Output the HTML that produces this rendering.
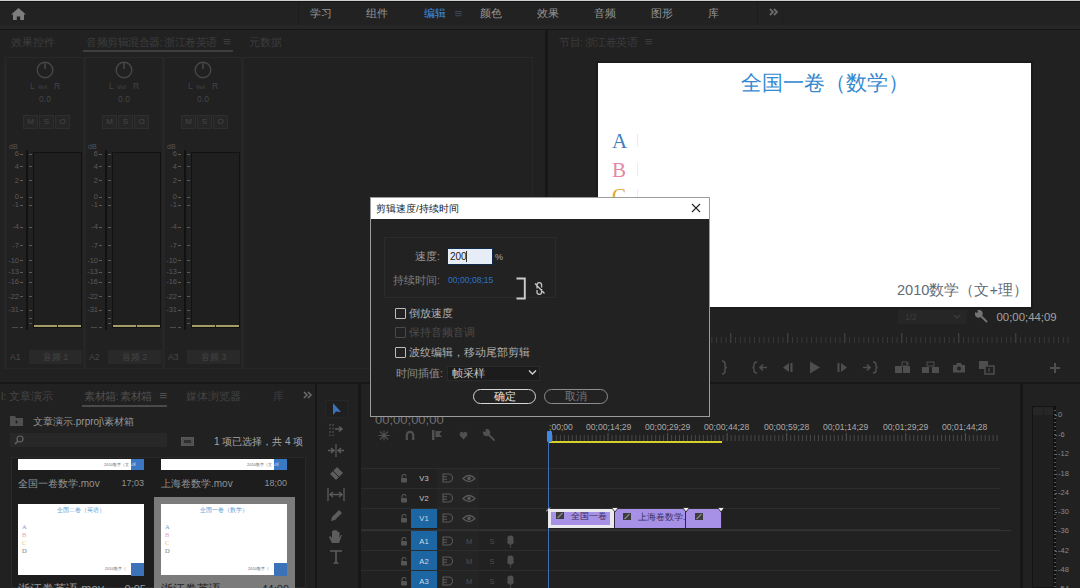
<!DOCTYPE html>
<html><head><meta charset="utf-8">
<style>
*{margin:0;padding:0;box-sizing:border-box}
html,body{width:1080px;height:588px;overflow:hidden;background:#171717;font-family:"Liberation Sans",sans-serif;position:relative}
.a{position:absolute}
.t{position:absolute;white-space:nowrap;line-height:1}
.p{position:absolute;background:#212121}
</style></head>
<body>
<div class="a" style="left:0px;top:0px;width:1080px;height:1px;background:#cfcfcf;"></div><div class="a" style="left:0px;top:1px;width:1080px;height:1px;background:#141414;"></div><div class="a" style="left:0px;top:2px;width:1080px;height:23px;background:#222222;"></div><div class="a" style="left:0px;top:25px;width:1080px;height:4px;background:#262626;"></div><div class="a" style="left:0px;top:29px;width:1080px;height:1px;background:#161616;"></div><div class="a" style="left:298px;top:2px;width:1px;height:23px;background:#1c1c1c;"></div><div class="a" style="left:757px;top:2px;width:1px;height:23px;background:#1c1c1c;"></div><div class="a" style="left:783px;top:2px;width:1px;height:23px;background:#202020;"></div><svg class="a" style="left:11px;top:8px;" width="15" height="12" viewBox="0 0 15 12"><path d="M7.5 0 L0 6.5 H2 V12 H5.8 V8.5 H9.2 V12 H13 V6.5 H15 Z" fill="#7d7d7d"/></svg><div class="t" style="left:310px;top:8.25px;font-size:10.5px;height:10.5px;color:#959595;">学习</div><div class="t" style="left:366px;top:8.25px;font-size:10.5px;height:10.5px;color:#959595;">组件</div><div class="t" style="left:424px;top:8.25px;font-size:10.5px;height:10.5px;color:#3d8fe3;">编辑</div><div class="t" style="left:480px;top:8.25px;font-size:10.5px;height:10.5px;color:#959595;">颜色</div><div class="t" style="left:537px;top:8.25px;font-size:10.5px;height:10.5px;color:#959595;">效果</div><div class="t" style="left:594px;top:8.25px;font-size:10.5px;height:10.5px;color:#959595;">音频</div><div class="t" style="left:651px;top:8.25px;font-size:10.5px;height:10.5px;color:#959595;">图形</div><div class="t" style="left:708px;top:8.25px;font-size:10.5px;height:10.5px;color:#959595;">库</div><div class="t" style="left:454.5px;top:6.75px;font-size:13.5px;height:13.5px;color:#3c4856;">≡</div><svg class="a" style="left:769px;top:8px;" width="10" height="8" viewBox="0 0 10 8"><path d="M1 1 L4 4 L1 7 M5 1 L8 4 L5 7" stroke="#6a6a6a" stroke-width="1.8" fill="none"/></svg><div class="p" style="left:0;top:30px;width:545px;height:352px"></div><div class="t" style="left:11px;top:36.75px;font-size:10.5px;height:10.5px;color:#3d3d3d;">效果控件</div><div class="t" style="left:86px;top:36.75px;font-size:10.5px;height:10.5px;color:#3d3d3d;letter-spacing:-0.5px">音频剪辑混合器: 浙江卷英语</div><div class="t" style="left:223px;top:35.25px;font-size:13.5px;height:13.5px;color:#3d3d3d;">≡</div><div class="a" style="left:83px;top:50px;width:150px;height:2px;background:#3e3e3e;"></div><div class="t" style="left:248.5px;top:36.75px;font-size:10.5px;height:10.5px;color:#3d3d3d;">元数据</div><div class="a" style="left:4px;top:57px;width:529px;height:1px;background:#292929;"></div><div class="a" style="left:532px;top:57px;width:1px;height:312px;background:#272727;"></div><div class="a" style="left:4px;top:368px;width:529px;height:1px;background:#272727;"></div><div class="a" style="left:4px;top:57px;width:3px;height:312px;background:#262626;"></div><div class="a" style="left:241px;top:57px;width:3px;height:312px;background:#262626;"></div><svg class="a" style="left:35px;top:60px;" width="20" height="20" viewBox="0 0 20 20"><circle cx="10" cy="10" r="7.8" fill="none" stroke="#474747" stroke-width="1.4"/><path d="M10 2.5 V9" stroke="#474747" stroke-width="1.5"/></svg><div class="t" style="left:30px;top:81.75px;font-size:8.5px;height:8.5px;color:#444;">L</div><div class="t" style="left:38px;top:83.50px;font-size:6px;height:6px;color:#3c3c3c;font-weight:bold">Vol</div><div class="t" style="left:54px;top:81.75px;font-size:8.5px;height:8.5px;color:#444;">R</div><div class="t" style="left:-155px;width:400px;text-align:center;top:94.75px;font-size:8.5px;height:8.5px;color:#464646;">0.0</div><div class="a" style="left:23px;top:115px;width:15px;height:14px;background:#262626;border:1px solid #2e2e2e"></div><div class="t" style="left:-169.5px;width:400px;text-align:center;top:118.00px;font-size:8px;height:8px;color:#474747;">M</div><div class="a" style="left:39px;top:115px;width:15px;height:14px;background:#262626;border:1px solid #2e2e2e"></div><div class="t" style="left:-153.5px;width:400px;text-align:center;top:118.00px;font-size:8px;height:8px;color:#474747;">S</div><div class="a" style="left:55px;top:115px;width:15px;height:14px;background:#262626;border:1px solid #2e2e2e"></div><div class="t" style="left:-137.5px;width:400px;text-align:center;top:118.00px;font-size:8px;height:8px;color:#474747;">O</div><div class="t" style="left:9px;top:142.50px;font-size:7px;height:7px;color:#555;">dB</div><div class="a" style="left:26px;top:150px;width:2px;height:180px;background:#121212;"></div><div class="t" style="right:1061px;top:150.25px;font-size:7.5px;height:7.5px;color:#5a5a5a;">6</div><div class="a" style="left:20px;top:154px;width:3px;height:1px;background:#5a5a5a;"></div><div class="a" style="left:29px;top:154px;width:3px;height:1px;background:#5a5a5a;"></div><div class="t" style="right:1061px;top:162.75px;font-size:7.5px;height:7.5px;color:#5a5a5a;">4</div><div class="a" style="left:20px;top:166px;width:3px;height:1px;background:#5a5a5a;"></div><div class="a" style="left:29px;top:166px;width:3px;height:1px;background:#5a5a5a;"></div><div class="t" style="right:1061px;top:176.75px;font-size:7.5px;height:7.5px;color:#5a5a5a;">2</div><div class="a" style="left:20px;top:180px;width:3px;height:1px;background:#5a5a5a;"></div><div class="a" style="left:29px;top:180px;width:3px;height:1px;background:#5a5a5a;"></div><div class="t" style="right:1061px;top:193.25px;font-size:7.5px;height:7.5px;color:#5a5a5a;">0</div><div class="a" style="left:20px;top:197px;width:3px;height:1px;background:#5a5a5a;"></div><div class="a" style="left:29px;top:197px;width:3px;height:1px;background:#5a5a5a;"></div><div class="t" style="right:1061px;top:201.25px;font-size:7.5px;height:7.5px;color:#5a5a5a;">-1</div><div class="a" style="left:20px;top:205px;width:3px;height:1px;background:#5a5a5a;"></div><div class="a" style="left:29px;top:205px;width:3px;height:1px;background:#5a5a5a;"></div><div class="t" style="right:1061px;top:223.25px;font-size:7.5px;height:7.5px;color:#5a5a5a;">-4</div><div class="a" style="left:20px;top:227px;width:3px;height:1px;background:#5a5a5a;"></div><div class="a" style="left:29px;top:227px;width:3px;height:1px;background:#5a5a5a;"></div><div class="t" style="right:1061px;top:241.75px;font-size:7.5px;height:7.5px;color:#5a5a5a;">-7</div><div class="a" style="left:20px;top:245px;width:3px;height:1px;background:#5a5a5a;"></div><div class="a" style="left:29px;top:245px;width:3px;height:1px;background:#5a5a5a;"></div><div class="t" style="right:1061px;top:256.75px;font-size:7.5px;height:7.5px;color:#5a5a5a;">-10</div><div class="a" style="left:20px;top:260px;width:3px;height:1px;background:#5a5a5a;"></div><div class="a" style="left:29px;top:260px;width:3px;height:1px;background:#5a5a5a;"></div><div class="t" style="right:1061px;top:268.25px;font-size:7.5px;height:7.5px;color:#5a5a5a;">-13</div><div class="a" style="left:20px;top:272px;width:3px;height:1px;background:#5a5a5a;"></div><div class="a" style="left:29px;top:272px;width:3px;height:1px;background:#5a5a5a;"></div><div class="t" style="right:1061px;top:278.25px;font-size:7.5px;height:7.5px;color:#5a5a5a;">-16</div><div class="a" style="left:20px;top:282px;width:3px;height:1px;background:#5a5a5a;"></div><div class="a" style="left:29px;top:282px;width:3px;height:1px;background:#5a5a5a;"></div><div class="t" style="right:1061px;top:292.75px;font-size:7.5px;height:7.5px;color:#5a5a5a;">-22</div><div class="a" style="left:20px;top:296px;width:3px;height:1px;background:#5a5a5a;"></div><div class="a" style="left:29px;top:296px;width:3px;height:1px;background:#5a5a5a;"></div><div class="t" style="right:1061px;top:306.25px;font-size:7.5px;height:7.5px;color:#5a5a5a;">-31</div><div class="a" style="left:20px;top:310px;width:3px;height:1px;background:#5a5a5a;"></div><div class="a" style="left:29px;top:310px;width:3px;height:1px;background:#5a5a5a;"></div><div class="a" style="left:29px;top:318px;width:3px;height:1px;background:#555;"></div><div class="a" style="left:29px;top:323px;width:3px;height:1px;background:#555;"></div><div class="a" style="left:12px;top:327px;width:6px;height:1px;background:#4a4a4a;"></div><div class="a" style="left:20px;top:327px;width:3px;height:1px;background:#555;"></div><div class="a" style="left:33px;top:152px;width:49px;height:176px;background:#1f1f1f;border:1px solid #121212"></div><div class="a" style="left:34px;top:325px;width:23px;height:2px;background:#a29d62;"></div><div class="a" style="left:58px;top:325px;width:23px;height:2px;background:#a29d62;"></div><div class="t" style="left:10px;top:352.75px;font-size:8.5px;height:8.5px;color:#484848;">A1</div><div class="a" style="left:29px;top:350px;width:53px;height:14px;background:#292929;"></div><div class="t" style="left:-144.5px;width:400px;text-align:center;top:352.50px;font-size:9px;height:9px;color:#444444;">音频 1</div><div class="a" style="left:83px;top:57px;width:3px;height:312px;background:#262626;"></div><svg class="a" style="left:114px;top:60px;" width="20" height="20" viewBox="0 0 20 20"><circle cx="10" cy="10" r="7.8" fill="none" stroke="#474747" stroke-width="1.4"/><path d="M10 2.5 V9" stroke="#474747" stroke-width="1.5"/></svg><div class="t" style="left:109px;top:81.75px;font-size:8.5px;height:8.5px;color:#444;">L</div><div class="t" style="left:117px;top:83.50px;font-size:6px;height:6px;color:#3c3c3c;font-weight:bold">Vol</div><div class="t" style="left:133px;top:81.75px;font-size:8.5px;height:8.5px;color:#444;">R</div><div class="t" style="left:-76px;width:400px;text-align:center;top:94.75px;font-size:8.5px;height:8.5px;color:#464646;">0.0</div><div class="a" style="left:102px;top:115px;width:15px;height:14px;background:#262626;border:1px solid #2e2e2e"></div><div class="t" style="left:-90.5px;width:400px;text-align:center;top:118.00px;font-size:8px;height:8px;color:#474747;">M</div><div class="a" style="left:118px;top:115px;width:15px;height:14px;background:#262626;border:1px solid #2e2e2e"></div><div class="t" style="left:-74.5px;width:400px;text-align:center;top:118.00px;font-size:8px;height:8px;color:#474747;">S</div><div class="a" style="left:134px;top:115px;width:15px;height:14px;background:#262626;border:1px solid #2e2e2e"></div><div class="t" style="left:-58.5px;width:400px;text-align:center;top:118.00px;font-size:8px;height:8px;color:#474747;">O</div><div class="t" style="left:88px;top:142.50px;font-size:7px;height:7px;color:#555;">dB</div><div class="a" style="left:105px;top:150px;width:2px;height:180px;background:#121212;"></div><div class="t" style="right:982px;top:150.25px;font-size:7.5px;height:7.5px;color:#5a5a5a;">6</div><div class="a" style="left:99px;top:154px;width:3px;height:1px;background:#5a5a5a;"></div><div class="a" style="left:108px;top:154px;width:3px;height:1px;background:#5a5a5a;"></div><div class="t" style="right:982px;top:162.75px;font-size:7.5px;height:7.5px;color:#5a5a5a;">4</div><div class="a" style="left:99px;top:166px;width:3px;height:1px;background:#5a5a5a;"></div><div class="a" style="left:108px;top:166px;width:3px;height:1px;background:#5a5a5a;"></div><div class="t" style="right:982px;top:176.75px;font-size:7.5px;height:7.5px;color:#5a5a5a;">2</div><div class="a" style="left:99px;top:180px;width:3px;height:1px;background:#5a5a5a;"></div><div class="a" style="left:108px;top:180px;width:3px;height:1px;background:#5a5a5a;"></div><div class="t" style="right:982px;top:193.25px;font-size:7.5px;height:7.5px;color:#5a5a5a;">0</div><div class="a" style="left:99px;top:197px;width:3px;height:1px;background:#5a5a5a;"></div><div class="a" style="left:108px;top:197px;width:3px;height:1px;background:#5a5a5a;"></div><div class="t" style="right:982px;top:201.25px;font-size:7.5px;height:7.5px;color:#5a5a5a;">-1</div><div class="a" style="left:99px;top:205px;width:3px;height:1px;background:#5a5a5a;"></div><div class="a" style="left:108px;top:205px;width:3px;height:1px;background:#5a5a5a;"></div><div class="t" style="right:982px;top:223.25px;font-size:7.5px;height:7.5px;color:#5a5a5a;">-4</div><div class="a" style="left:99px;top:227px;width:3px;height:1px;background:#5a5a5a;"></div><div class="a" style="left:108px;top:227px;width:3px;height:1px;background:#5a5a5a;"></div><div class="t" style="right:982px;top:241.75px;font-size:7.5px;height:7.5px;color:#5a5a5a;">-7</div><div class="a" style="left:99px;top:245px;width:3px;height:1px;background:#5a5a5a;"></div><div class="a" style="left:108px;top:245px;width:3px;height:1px;background:#5a5a5a;"></div><div class="t" style="right:982px;top:256.75px;font-size:7.5px;height:7.5px;color:#5a5a5a;">-10</div><div class="a" style="left:99px;top:260px;width:3px;height:1px;background:#5a5a5a;"></div><div class="a" style="left:108px;top:260px;width:3px;height:1px;background:#5a5a5a;"></div><div class="t" style="right:982px;top:268.25px;font-size:7.5px;height:7.5px;color:#5a5a5a;">-13</div><div class="a" style="left:99px;top:272px;width:3px;height:1px;background:#5a5a5a;"></div><div class="a" style="left:108px;top:272px;width:3px;height:1px;background:#5a5a5a;"></div><div class="t" style="right:982px;top:278.25px;font-size:7.5px;height:7.5px;color:#5a5a5a;">-16</div><div class="a" style="left:99px;top:282px;width:3px;height:1px;background:#5a5a5a;"></div><div class="a" style="left:108px;top:282px;width:3px;height:1px;background:#5a5a5a;"></div><div class="t" style="right:982px;top:292.75px;font-size:7.5px;height:7.5px;color:#5a5a5a;">-22</div><div class="a" style="left:99px;top:296px;width:3px;height:1px;background:#5a5a5a;"></div><div class="a" style="left:108px;top:296px;width:3px;height:1px;background:#5a5a5a;"></div><div class="t" style="right:982px;top:306.25px;font-size:7.5px;height:7.5px;color:#5a5a5a;">-31</div><div class="a" style="left:99px;top:310px;width:3px;height:1px;background:#5a5a5a;"></div><div class="a" style="left:108px;top:310px;width:3px;height:1px;background:#5a5a5a;"></div><div class="a" style="left:108px;top:318px;width:3px;height:1px;background:#555;"></div><div class="a" style="left:108px;top:323px;width:3px;height:1px;background:#555;"></div><div class="a" style="left:91px;top:327px;width:6px;height:1px;background:#4a4a4a;"></div><div class="a" style="left:99px;top:327px;width:3px;height:1px;background:#555;"></div><div class="a" style="left:112px;top:152px;width:49px;height:176px;background:#1f1f1f;border:1px solid #121212"></div><div class="a" style="left:113px;top:325px;width:23px;height:2px;background:#a29d62;"></div><div class="a" style="left:137px;top:325px;width:23px;height:2px;background:#a29d62;"></div><div class="t" style="left:89px;top:352.75px;font-size:8.5px;height:8.5px;color:#484848;">A2</div><div class="a" style="left:108px;top:350px;width:53px;height:14px;background:#292929;"></div><div class="t" style="left:-65.5px;width:400px;text-align:center;top:352.50px;font-size:9px;height:9px;color:#444444;">音频 2</div><div class="a" style="left:162px;top:57px;width:3px;height:312px;background:#262626;"></div><svg class="a" style="left:193px;top:60px;" width="20" height="20" viewBox="0 0 20 20"><circle cx="10" cy="10" r="7.8" fill="none" stroke="#474747" stroke-width="1.4"/><path d="M10 2.5 V9" stroke="#474747" stroke-width="1.5"/></svg><div class="t" style="left:188px;top:81.75px;font-size:8.5px;height:8.5px;color:#444;">L</div><div class="t" style="left:196px;top:83.50px;font-size:6px;height:6px;color:#3c3c3c;font-weight:bold">Vol</div><div class="t" style="left:212px;top:81.75px;font-size:8.5px;height:8.5px;color:#444;">R</div><div class="t" style="left:3px;width:400px;text-align:center;top:94.75px;font-size:8.5px;height:8.5px;color:#464646;">0.0</div><div class="a" style="left:181px;top:115px;width:15px;height:14px;background:#262626;border:1px solid #2e2e2e"></div><div class="t" style="left:-11.5px;width:400px;text-align:center;top:118.00px;font-size:8px;height:8px;color:#474747;">M</div><div class="a" style="left:197px;top:115px;width:15px;height:14px;background:#262626;border:1px solid #2e2e2e"></div><div class="t" style="left:4.5px;width:400px;text-align:center;top:118.00px;font-size:8px;height:8px;color:#474747;">S</div><div class="a" style="left:213px;top:115px;width:15px;height:14px;background:#262626;border:1px solid #2e2e2e"></div><div class="t" style="left:20.5px;width:400px;text-align:center;top:118.00px;font-size:8px;height:8px;color:#474747;">O</div><div class="t" style="left:167px;top:142.50px;font-size:7px;height:7px;color:#555;">dB</div><div class="a" style="left:184px;top:150px;width:2px;height:180px;background:#121212;"></div><div class="t" style="right:903px;top:150.25px;font-size:7.5px;height:7.5px;color:#5a5a5a;">6</div><div class="a" style="left:178px;top:154px;width:3px;height:1px;background:#5a5a5a;"></div><div class="a" style="left:187px;top:154px;width:3px;height:1px;background:#5a5a5a;"></div><div class="t" style="right:903px;top:162.75px;font-size:7.5px;height:7.5px;color:#5a5a5a;">4</div><div class="a" style="left:178px;top:166px;width:3px;height:1px;background:#5a5a5a;"></div><div class="a" style="left:187px;top:166px;width:3px;height:1px;background:#5a5a5a;"></div><div class="t" style="right:903px;top:176.75px;font-size:7.5px;height:7.5px;color:#5a5a5a;">2</div><div class="a" style="left:178px;top:180px;width:3px;height:1px;background:#5a5a5a;"></div><div class="a" style="left:187px;top:180px;width:3px;height:1px;background:#5a5a5a;"></div><div class="t" style="right:903px;top:193.25px;font-size:7.5px;height:7.5px;color:#5a5a5a;">0</div><div class="a" style="left:178px;top:197px;width:3px;height:1px;background:#5a5a5a;"></div><div class="a" style="left:187px;top:197px;width:3px;height:1px;background:#5a5a5a;"></div><div class="t" style="right:903px;top:201.25px;font-size:7.5px;height:7.5px;color:#5a5a5a;">-1</div><div class="a" style="left:178px;top:205px;width:3px;height:1px;background:#5a5a5a;"></div><div class="a" style="left:187px;top:205px;width:3px;height:1px;background:#5a5a5a;"></div><div class="t" style="right:903px;top:223.25px;font-size:7.5px;height:7.5px;color:#5a5a5a;">-4</div><div class="a" style="left:178px;top:227px;width:3px;height:1px;background:#5a5a5a;"></div><div class="a" style="left:187px;top:227px;width:3px;height:1px;background:#5a5a5a;"></div><div class="t" style="right:903px;top:241.75px;font-size:7.5px;height:7.5px;color:#5a5a5a;">-7</div><div class="a" style="left:178px;top:245px;width:3px;height:1px;background:#5a5a5a;"></div><div class="a" style="left:187px;top:245px;width:3px;height:1px;background:#5a5a5a;"></div><div class="t" style="right:903px;top:256.75px;font-size:7.5px;height:7.5px;color:#5a5a5a;">-10</div><div class="a" style="left:178px;top:260px;width:3px;height:1px;background:#5a5a5a;"></div><div class="a" style="left:187px;top:260px;width:3px;height:1px;background:#5a5a5a;"></div><div class="t" style="right:903px;top:268.25px;font-size:7.5px;height:7.5px;color:#5a5a5a;">-13</div><div class="a" style="left:178px;top:272px;width:3px;height:1px;background:#5a5a5a;"></div><div class="a" style="left:187px;top:272px;width:3px;height:1px;background:#5a5a5a;"></div><div class="t" style="right:903px;top:278.25px;font-size:7.5px;height:7.5px;color:#5a5a5a;">-16</div><div class="a" style="left:178px;top:282px;width:3px;height:1px;background:#5a5a5a;"></div><div class="a" style="left:187px;top:282px;width:3px;height:1px;background:#5a5a5a;"></div><div class="t" style="right:903px;top:292.75px;font-size:7.5px;height:7.5px;color:#5a5a5a;">-22</div><div class="a" style="left:178px;top:296px;width:3px;height:1px;background:#5a5a5a;"></div><div class="a" style="left:187px;top:296px;width:3px;height:1px;background:#5a5a5a;"></div><div class="t" style="right:903px;top:306.25px;font-size:7.5px;height:7.5px;color:#5a5a5a;">-31</div><div class="a" style="left:178px;top:310px;width:3px;height:1px;background:#5a5a5a;"></div><div class="a" style="left:187px;top:310px;width:3px;height:1px;background:#5a5a5a;"></div><div class="a" style="left:187px;top:318px;width:3px;height:1px;background:#555;"></div><div class="a" style="left:187px;top:323px;width:3px;height:1px;background:#555;"></div><div class="a" style="left:170px;top:327px;width:6px;height:1px;background:#4a4a4a;"></div><div class="a" style="left:178px;top:327px;width:3px;height:1px;background:#555;"></div><div class="a" style="left:191px;top:152px;width:49px;height:176px;background:#1f1f1f;border:1px solid #121212"></div><div class="a" style="left:192px;top:325px;width:23px;height:2px;background:#a29d62;"></div><div class="a" style="left:216px;top:325px;width:23px;height:2px;background:#a29d62;"></div><div class="t" style="left:168px;top:352.75px;font-size:8.5px;height:8.5px;color:#484848;">A3</div><div class="a" style="left:187px;top:350px;width:53px;height:14px;background:#292929;"></div><div class="t" style="left:13.5px;width:400px;text-align:center;top:352.50px;font-size:9px;height:9px;color:#444444;">音频 3</div><div class="p" style="left:548px;top:30px;width:532px;height:352px"></div><div class="t" style="left:559px;top:36.75px;font-size:10.5px;height:10.5px;color:#3b3b3b;letter-spacing:-0.5px">节目: 浙江卷英语</div><div class="t" style="left:645px;top:35.25px;font-size:13.5px;height:13.5px;color:#3b3b3b;">≡</div><div class="a" style="left:596px;top:61px;width:437px;height:248px;background:#1b1b1b;"></div><div class="a" style="left:598px;top:63px;width:433px;height:244px;background:#ffffff;"></div><div class="t" style="left:740.5px;top:72.20px;font-size:21.2px;height:21.2px;color:#3589d0;">全国一卷（数学）</div><div class="t" style="left:612px;top:130.50px;font-size:21px;height:21px;color:#3f7fc2;font-family:'Liberation Serif',serif">A</div><div class="a" style="left:637px;top:134px;width:1px;height:13px;background:#ececec;"></div><div class="t" style="left:612px;top:159.50px;font-size:21px;height:21px;color:#e487a6;font-family:'Liberation Serif',serif">B</div><div class="a" style="left:637px;top:163px;width:1px;height:13px;background:#ececec;"></div><div class="t" style="left:612px;top:185.50px;font-size:21px;height:21px;color:#e3a92a;font-family:'Liberation Serif',serif">C</div><div class="a" style="left:637px;top:189px;width:1px;height:13px;background:#ececec;"></div><div class="t" style="left:897px;top:283.20px;font-size:14.6px;height:14.6px;color:#5f6d78;">2010数学（文+理）</div><div class="a" style="left:898px;top:310px;width:69px;height:14px;background:#262626;"></div><div class="t" style="left:905px;top:312.75px;font-size:8.5px;height:8.5px;color:#3c3c3c;">1/2</div><svg class="a" style="left:953px;top:313px;" width="8" height="7" viewBox="0 0 8 7"><path d="M1 2 L4 5 L7 2" stroke="#3c3c3c" stroke-width="1.3" fill="none"/></svg><svg class="a" style="left:975px;top:310px;" width="13" height="13" viewBox="0 0 13 13"><path d="M3.5 0.8 A3 3 0 1 1 0.8 3.5 L2.5 4 L4 2.5 Z M5 5 L11.5 11.5" stroke="#737373" stroke-width="1.9" fill="#737373" stroke-linecap="round"/></svg><div class="t" style="left:996.5px;top:311.80px;font-size:11.4px;height:11.4px;color:#a3a3a3;">00;00;44;09</div><svg class="a" style="left:700px;top:333px;" width="380" height="11" viewBox="0 0 380 11"><rect x="11.3" y="4" width="1" height="6" fill="#383838"/><rect x="16.0" y="4" width="1" height="6" fill="#383838"/><rect x="20.8" y="4" width="1" height="6" fill="#383838"/><rect x="25.5" y="4" width="1" height="6" fill="#383838"/><rect x="30.3" y="0" width="1" height="10" fill="#4a4a4a"/><rect x="35.0" y="4" width="1" height="6" fill="#383838"/><rect x="39.8" y="4" width="1" height="6" fill="#383838"/><rect x="44.5" y="4" width="1" height="6" fill="#383838"/><rect x="49.3" y="4" width="1" height="6" fill="#383838"/><rect x="54.0" y="4" width="1" height="6" fill="#383838"/><rect x="58.8" y="4" width="1" height="6" fill="#383838"/><rect x="63.5" y="4" width="1" height="6" fill="#383838"/><rect x="68.3" y="4" width="1" height="6" fill="#383838"/><rect x="73.0" y="4" width="1" height="6" fill="#383838"/><rect x="77.8" y="4" width="1" height="6" fill="#383838"/><rect x="82.5" y="4" width="1" height="6" fill="#383838"/><rect x="87.3" y="0" width="1" height="10" fill="#4a4a4a"/><rect x="92.0" y="4" width="1" height="6" fill="#383838"/><rect x="96.8" y="4" width="1" height="6" fill="#383838"/><rect x="101.5" y="4" width="1" height="6" fill="#383838"/><rect x="106.3" y="4" width="1" height="6" fill="#383838"/><rect x="111.0" y="4" width="1" height="6" fill="#383838"/><rect x="115.8" y="4" width="1" height="6" fill="#383838"/><rect x="120.5" y="4" width="1" height="6" fill="#383838"/><rect x="125.3" y="4" width="1" height="6" fill="#383838"/><rect x="130.0" y="4" width="1" height="6" fill="#383838"/><rect x="134.8" y="4" width="1" height="6" fill="#383838"/><rect x="139.5" y="4" width="1" height="6" fill="#383838"/><rect x="144.3" y="0" width="1" height="10" fill="#4a4a4a"/><rect x="149.0" y="4" width="1" height="6" fill="#383838"/><rect x="153.8" y="4" width="1" height="6" fill="#383838"/><rect x="158.5" y="4" width="1" height="6" fill="#383838"/><rect x="163.3" y="4" width="1" height="6" fill="#383838"/><rect x="168.0" y="4" width="1" height="6" fill="#383838"/><rect x="172.8" y="4" width="1" height="6" fill="#383838"/><rect x="177.5" y="4" width="1" height="6" fill="#383838"/><rect x="182.3" y="4" width="1" height="6" fill="#383838"/><rect x="187.0" y="4" width="1" height="6" fill="#383838"/><rect x="191.8" y="4" width="1" height="6" fill="#383838"/><rect x="196.5" y="4" width="1" height="6" fill="#383838"/><rect x="201.3" y="0" width="1" height="10" fill="#4a4a4a"/><rect x="206.0" y="4" width="1" height="6" fill="#383838"/><rect x="210.8" y="4" width="1" height="6" fill="#383838"/><rect x="215.5" y="4" width="1" height="6" fill="#383838"/><rect x="220.3" y="4" width="1" height="6" fill="#383838"/><rect x="225.0" y="4" width="1" height="6" fill="#383838"/><rect x="229.8" y="4" width="1" height="6" fill="#383838"/><rect x="234.5" y="4" width="1" height="6" fill="#383838"/><rect x="239.3" y="4" width="1" height="6" fill="#383838"/><rect x="244.0" y="4" width="1" height="6" fill="#383838"/><rect x="248.8" y="4" width="1" height="6" fill="#383838"/><rect x="253.5" y="4" width="1" height="6" fill="#383838"/><rect x="258.3" y="0" width="1" height="10" fill="#4a4a4a"/><rect x="263.0" y="4" width="1" height="6" fill="#383838"/><rect x="267.8" y="4" width="1" height="6" fill="#383838"/><rect x="272.5" y="4" width="1" height="6" fill="#383838"/><rect x="277.3" y="4" width="1" height="6" fill="#383838"/><rect x="282.0" y="4" width="1" height="6" fill="#383838"/><rect x="286.8" y="4" width="1" height="6" fill="#383838"/><rect x="291.5" y="4" width="1" height="6" fill="#383838"/><rect x="296.3" y="4" width="1" height="6" fill="#383838"/><rect x="301.0" y="4" width="1" height="6" fill="#383838"/><rect x="305.8" y="4" width="1" height="6" fill="#383838"/><rect x="310.5" y="4" width="1" height="6" fill="#383838"/><rect x="315.3" y="0" width="1" height="10" fill="#4a4a4a"/><rect x="320.0" y="4" width="1" height="6" fill="#383838"/><rect x="324.8" y="4" width="1" height="6" fill="#383838"/><rect x="329.5" y="4" width="1" height="6" fill="#383838"/><rect x="334.3" y="4" width="1" height="6" fill="#383838"/><rect x="339.0" y="4" width="1" height="6" fill="#383838"/><rect x="343.8" y="4" width="1" height="6" fill="#383838"/><rect x="348.5" y="4" width="1" height="6" fill="#383838"/><rect x="353.3" y="4" width="1" height="6" fill="#383838"/><rect x="358.0" y="4" width="1" height="6" fill="#383838"/><rect x="362.8" y="4" width="1" height="6" fill="#383838"/><rect x="367.5" y="4" width="1" height="6" fill="#383838"/></svg><svg class="a" style="left:720px;top:360px;" width="8" height="15" viewBox="0 0 8 15"><path d="M2 1 Q5 1 5 4 V6 Q5 7.5 7 7.5 Q5 7.5 5 9 V11 Q5 14 2 14" stroke="#4e4e4e" stroke-width="1.5" fill="none"/></svg><svg class="a" style="left:752px;top:361px;" width="16" height="13" viewBox="0 0 16 13"><path d="M5 1 Q2 1 2 3.5 V5 Q2 6.5 0.5 6.5 Q2 6.5 2 8 V9.5 Q2 12 5 12" stroke="#4e4e4e" stroke-width="1.4" fill="none"/><path d="M15 6.5 H8 M11 3.5 L8 6.5 L11 9.5" stroke="#4e4e4e" stroke-width="1.6" fill="none"/></svg><svg class="a" style="left:780px;top:361px;" width="14" height="13" viewBox="0 0 14 13"><path d="M9 2 L3 6.5 L9 11 Z" fill="#4e4e4e"/><rect x="10.5" y="2" width="2" height="9" fill="#4e4e4e"/></svg><svg class="a" style="left:808px;top:360px;" width="14" height="15" viewBox="0 0 14 15"><path d="M2 1.5 L12 7.5 L2 13.5 Z" fill="#4e4e4e"/></svg><svg class="a" style="left:836px;top:361px;" width="14" height="13" viewBox="0 0 14 13"><rect x="1.5" y="2" width="2" height="9" fill="#4e4e4e"/><path d="M5 2 L11 6.5 L5 11 Z" fill="#4e4e4e"/></svg><svg class="a" style="left:862px;top:361px;" width="16" height="13" viewBox="0 0 16 13"><path d="M11 1 Q14 1 14 3.5 V5 Q14 6.5 15.5 6.5 Q14 6.5 14 8 V9.5 Q14 12 11 12" stroke="#4e4e4e" stroke-width="1.4" fill="none"/><path d="M1 6.5 H8 M5 3.5 L8 6.5 L5 9.5" stroke="#4e4e4e" stroke-width="1.6" fill="none"/></svg><svg class="a" style="left:895px;top:361px;" width="16" height="13" viewBox="0 0 16 13"><rect x="0" y="5" width="7" height="7" fill="#4e4e4e"/><rect x="8" y="5" width="7" height="7" fill="#4e4e4e"/><rect x="7" y="1" width="5" height="4" fill="none" stroke="#4e4e4e" stroke-width="1"/><path d="M13 1 V4" stroke="#4e4e4e"/></svg><svg class="a" style="left:922px;top:361px;" width="17" height="13" viewBox="0 0 17 13"><rect x="5" y="1" width="7" height="4" fill="none" stroke="#4e4e4e" stroke-width="1"/><rect x="0" y="6" width="7" height="6" fill="#4e4e4e"/><rect x="10" y="6" width="7" height="6" fill="#4e4e4e"/></svg><svg class="a" style="left:952px;top:362px;" width="14" height="11" viewBox="0 0 14 11"><path d="M1 3 H4 L5 1 H9 L10 3 H13 V10.5 H1 Z" fill="#4e4e4e"/><circle cx="7" cy="6.5" r="2" fill="#212121"/></svg><svg class="a" style="left:979px;top:360px;" width="16" height="15" viewBox="0 0 16 15"><rect x="0" y="1" width="9" height="8" fill="#4e4e4e"/><rect x="6" y="6" width="9" height="8" fill="#212121" stroke="#4e4e4e" stroke-width="1.5"/><path d="M10 8 V12" stroke="#4e4e4e" stroke-width="1.2"/></svg><svg class="a" style="left:1049px;top:362px;" width="12" height="12" viewBox="0 0 12 12"><path d="M6 1 V11 M1 6 H11" stroke="#4e4e4e" stroke-width="2"/></svg><div class="p" style="left:0;top:384px;width:315px;height:204px"></div><div class="p" style="left:317px;top:384px;width:41px;height:204px"></div><div class="p" style="left:361px;top:384px;width:659px;height:204px"></div><div class="p" style="left:1023px;top:384px;width:57px;height:204px"></div><div class="t" style="left:1px;top:390.75px;font-size:10.5px;height:10.5px;color:#464646;">l: 文章演示</div><div class="t" style="left:84px;top:390.75px;font-size:10.5px;height:10.5px;color:#4f4f4f;letter-spacing:-0.5px">素材箱: 素材箱</div><div class="t" style="left:159.5px;top:389.25px;font-size:13.5px;height:13.5px;color:#4f4f4f;">≡</div><div class="a" style="left:82px;top:405px;width:85px;height:2px;background:#4a4a4a;"></div><div class="t" style="left:186px;top:390.75px;font-size:10.5px;height:10.5px;color:#434343;">媒体浏览器</div><div class="t" style="left:273px;top:390.75px;font-size:10.5px;height:10.5px;color:#3c3c3c;">库</div><svg class="a" style="left:303px;top:391px;" width="10" height="8" viewBox="0 0 10 8"><path d="M1 1 L4 4 L1 7 M5 1 L8 4 L5 7" stroke="#6a6a6a" stroke-width="1.6" fill="none"/></svg><svg class="a" style="left:10px;top:416px;" width="13" height="10" viewBox="0 0 13 10"><path d="M0 0 H5 L6 2 H13 V10 H0 Z" fill="#505050"/><path d="M5 6 H8 M6.5 4.5 V7.5" stroke="#212121"/></svg><div class="t" style="left:33px;top:416.50px;font-size:10px;height:10px;color:#979797;">文章演示.prproj\素材箱</div><div class="a" style="left:10px;top:433px;width:157px;height:14px;background:#282828;"></div><svg class="a" style="left:14px;top:435px;" width="10" height="10" viewBox="0 0 10 10"><circle cx="6" cy="4" r="3" fill="none" stroke="#666" stroke-width="1.2"/><path d="M4 6 L1 9" stroke="#666" stroke-width="1.5"/></svg><svg class="a" style="left:181px;top:437px;" width="13" height="9" viewBox="0 0 13 9"><rect x="0.5" y="0.5" width="12" height="8" fill="#505050" stroke="#575757"/><rect x="3" y="3" width="7" height="3" fill="#2f2f2f"/></svg><div class="t" style="left:214px;top:436.50px;font-size:10px;height:10px;color:#a6a6a6;">1 项已选择，共 4 项</div><div class="a" style="left:11px;top:457px;width:295px;height:131px;background:#1d1d1d;border:1px solid #292929"></div><div class="a" style="left:18px;top:459px;width:126px;height:11px;background:#ffffff;"></div><div class="t" style="left:104px;top:462.50px;font-size:4px;height:4px;color:#666;">2010数学（文</div><div class="a" style="left:131px;top:459px;width:13px;height:11px;background:#3b78c4;"></div><div class="t" style="left:130px;top:462.50px;font-size:4px;height:4px;color:#dde;">+理</div><div class="a" style="left:161px;top:459px;width:126px;height:11px;background:#ffffff;"></div><div class="t" style="left:247px;top:462.50px;font-size:4px;height:4px;color:#666;">2010数学（文</div><div class="a" style="left:274px;top:459px;width:13px;height:11px;background:#3b78c4;"></div><div class="t" style="left:273px;top:462.50px;font-size:4px;height:4px;color:#dde;">+理</div><div class="t" style="left:18px;top:478.50px;font-size:10px;height:10px;color:#929292;">全国一卷数学.mov</div><div class="t" style="right:936px;top:479.00px;font-size:9px;height:9px;color:#929292;">17;03</div><div class="t" style="left:161px;top:478.50px;font-size:10px;height:10px;color:#929292;">上海卷数学.mov</div><div class="t" style="right:793px;top:479.00px;font-size:9px;height:9px;color:#929292;">18;00</div><div class="a" style="left:154px;top:497px;width:141px;height:91px;background:#7b7b7b;"></div><div class="a" style="left:18px;top:504px;width:126px;height:71px;background:#ffffff;"></div><div class="t" style="left:-119px;width:400px;text-align:center;top:506.50px;font-size:6px;height:6px;color:#5a9ad6;">全国二卷（英语）</div><div class="t" style="left:22px;top:523.75px;font-size:6.5px;height:6.5px;color:#7aa0d0;font-family:'Liberation Serif',serif">A</div><div class="t" style="left:22px;top:531.75px;font-size:6.5px;height:6.5px;color:#e8a8bc;font-family:'Liberation Serif',serif">B</div><div class="t" style="left:22px;top:539.75px;font-size:6.5px;height:6.5px;color:#e8c870;font-family:'Liberation Serif',serif">C</div><div class="t" style="left:22px;top:547.75px;font-size:6.5px;height:6.5px;color:#7a7a7a;font-family:'Liberation Serif',serif">D</div><div class="a" style="left:131px;top:563px;width:13px;height:13px;background:#3c72b8;"></div><div class="t" style="left:105px;top:567.00px;font-size:4px;height:4px;color:#666;">2010数学（</div><div class="a" style="left:161px;top:504px;width:126px;height:71px;background:#ffffff;"></div><div class="t" style="left:24px;width:400px;text-align:center;top:506.50px;font-size:6px;height:6px;color:#5a9ad6;">全国一卷（数学）</div><div class="t" style="left:165px;top:523.75px;font-size:6.5px;height:6.5px;color:#7aa0d0;font-family:'Liberation Serif',serif">A</div><div class="t" style="left:165px;top:531.75px;font-size:6.5px;height:6.5px;color:#e8a8bc;font-family:'Liberation Serif',serif">B</div><div class="t" style="left:165px;top:539.75px;font-size:6.5px;height:6.5px;color:#e8c870;font-family:'Liberation Serif',serif">C</div><div class="t" style="left:165px;top:547.75px;font-size:6.5px;height:6.5px;color:#7a7a7a;font-family:'Liberation Serif',serif">D</div><div class="a" style="left:274px;top:563px;width:13px;height:13px;background:#3c72b8;"></div><div class="t" style="left:248px;top:567.00px;font-size:4px;height:4px;color:#666;">2010数学（</div><div class="t" style="left:18px;top:583.00px;font-size:12px;height:12px;color:#9a9a9a;">浙江卷英语.mov</div><div class="t" style="right:934px;top:583.50px;font-size:11px;height:11px;color:#9a9a9a;">0;05</div><div class="t" style="left:161px;top:583.00px;font-size:12px;height:12px;color:#1e1e1e;">浙江卷英语</div><div class="t" style="right:791px;top:583.50px;font-size:11px;height:11px;color:#1e1e1e;">44;09</div><div class="a" style="left:325px;top:400px;width:23px;height:18px;background:#1f1f1f;border:1px solid #262626"></div><svg class="a" style="left:329px;top:401px;" width="14" height="16" viewBox="0 0 14 16"><path d="M4 2 L4 14 L7 10.5 L12 11 Z" fill="#3a72bf"/></svg><svg class="a" style="left:329px;top:423px;" width="15" height="14" viewBox="0 0 15 14"><path d="M1 1 V13 M4 1 V13" stroke="#5c5c5c" stroke-width="1" stroke-dasharray="2 1.5"/><path d="M6 6 H13 M10 3.5 L13 6 L10 8.5" stroke="#5c5c5c" stroke-width="1.6" fill="none"/></svg><svg class="a" style="left:328px;top:444px;" width="16" height="13" viewBox="0 0 16 13"><path d="M8 0 V13" stroke="#5c5c5c" stroke-width="1.2"/><path d="M0 6.5 H6 M3 4 L6 6.5 L3 9 M16 6.5 H10 M13 4 L10 6.5 L13 9" stroke="#5c5c5c" stroke-width="1.4" fill="none"/></svg><svg class="a" style="left:329px;top:466px;" width="15" height="14" viewBox="0 0 15 14"><path d="M1 8 L8 1 L14 7 L7 14 Z" fill="#5c5c5c"/><path d="M4 5 L10 11" stroke="#212121" stroke-width="1"/></svg><svg class="a" style="left:327px;top:487px;" width="18" height="15" viewBox="0 0 18 15"><path d="M1 1 V14 M17 1 V14" stroke="#5c5c5c" stroke-width="1.3"/><path d="M3 7.5 H15 M6 5 L3 7.5 L6 10 M12 5 L15 7.5 L12 10" stroke="#5c5c5c" stroke-width="1.3" fill="none"/></svg><svg class="a" style="left:329px;top:509px;" width="14" height="14" viewBox="0 0 14 14"><path d="M2 12 L3 8 L10 1 L13 4 L6 11 Z" fill="#5c5c5c"/></svg><svg class="a" style="left:328px;top:529px;" width="15" height="15" viewBox="0 0 15 15"><path d="M4 14 L1 8 L2 7 L4 9 V2 H5.5 V7 V1 H7.5 V7 V1.5 H9.5 V7 V3 H11.5 V9 L13 6 H14 L11 14 Z" fill="#5c5c5c"/></svg><svg class="a" style="left:329px;top:550px;" width="14" height="14" viewBox="0 0 14 14"><path d="M1 1 H13 M7 1 V13 M4.5 13 H9.5" stroke="#5c5c5c" stroke-width="1.6" fill="none"/></svg><div class="t" style="left:375px;top:413.00px;font-size:13px;height:13px;color:#707070;">00;00;00;00</div><svg class="a" style="left:378px;top:430px;" width="12" height="11" viewBox="0 0 12 11"><path d="M6 0.5 V10.5 M0.5 5.5 H11.5 M2 1.5 L10 9.5 M10 1.5 L2 9.5" stroke="#505050" stroke-width="1.1"/><circle cx="6" cy="5.5" r="1.6" fill="#505050"/></svg><svg class="a" style="left:405px;top:430px;" width="10" height="10" viewBox="0 0 10 10"><path d="M1.8 10 V5 A3.2 3.2 0 0 1 8.2 5 V10" stroke="#505050" stroke-width="2.2" fill="none"/></svg><svg class="a" style="left:431px;top:429px;" width="12" height="12" viewBox="0 0 12 12"><path d="M1 1 H3.5 V11 H1 Z M4.5 2 L11 2 L8.5 5 L11 8 L4.5 8 Z" fill="#505050"/></svg><svg class="a" style="left:459px;top:431px;" width="9" height="9" viewBox="0 0 9 9"><path d="M4.5 8.5 L0.8 4.5 V1.8 L2.5 0.8 L4.5 1.8 L6.5 0.8 L8.2 1.8 V4.5 Z" fill="#505050"/></svg><svg class="a" style="left:483px;top:429px;" width="12" height="12" viewBox="0 0 12 12"><path d="M3.5 0.8 A2.8 2.8 0 1 1 0.8 3.5 L2.3 4 L3.8 2.5 Z M4.5 4.5 L11 11" stroke="#505050" stroke-width="1.8" fill="#505050" stroke-linecap="round"/></svg><div class="a" style="left:361px;top:469px;width:187px;height:120px;background:#212121;"></div><div class="a" style="left:437px;top:469px;width:42px;height:120px;background:#242424;"></div><div class="a" style="left:361px;top:468px;width:639px;height:1px;background:#2d2d2d;"></div><div class="a" style="left:361px;top:488px;width:639px;height:1px;background:#2d2d2d;"></div><div class="a" style="left:361px;top:508px;width:639px;height:1px;background:#2d2d2d;"></div><div class="a" style="left:361px;top:529px;width:639px;height:1px;background:#2d2d2d;"></div><div class="a" style="left:361px;top:550px;width:639px;height:1px;background:#2d2d2d;"></div><div class="a" style="left:361px;top:570px;width:639px;height:1px;background:#2d2d2d;"></div><div class="a" style="left:361px;top:530px;width:650px;height:1px;background:#343434;"></div><svg class="a" style="left:400px;top:474px;" width="8" height="9" viewBox="0 0 8 9"><path d="M2 4 V2.5 A2 2 0 0 1 6 2.5" stroke="#555" stroke-width="1.1" fill="none"/><rect x="1" y="4" width="6" height="4.5" rx="0.8" fill="#555"/></svg><div class="t" style="left:224px;width:400px;text-align:center;top:475.20px;font-size:7.6px;height:7.6px;color:#c4c4c4;">V3</div><svg class="a" style="left:442px;top:473px;" width="12" height="10" viewBox="0 0 12 10"><path d="M1 1 H6.5 A4 4 0 0 1 6.5 9 H1 Z M1 3.7 H5 M1 6.3 H5" stroke="#5a5a5a" stroke-width="1.1" fill="none"/></svg><svg class="a" style="left:462px;top:474px;" width="14" height="9" viewBox="0 0 14 9"><path d="M1 4.5 Q7 -1.5 13 4.5 Q7 10.5 1 4.5 Z" stroke="#5a5a5a" stroke-width="1.2" fill="none"/><circle cx="7" cy="4.5" r="1.8" fill="#5a5a5a"/></svg><svg class="a" style="left:400px;top:494px;" width="8" height="9" viewBox="0 0 8 9"><path d="M2 4 V2.5 A2 2 0 0 1 6 2.5" stroke="#555" stroke-width="1.1" fill="none"/><rect x="1" y="4" width="6" height="4.5" rx="0.8" fill="#555"/></svg><div class="t" style="left:224px;width:400px;text-align:center;top:494.70px;font-size:7.6px;height:7.6px;color:#c4c4c4;">V2</div><svg class="a" style="left:442px;top:493px;" width="12" height="10" viewBox="0 0 12 10"><path d="M1 1 H6.5 A4 4 0 0 1 6.5 9 H1 Z M1 3.7 H5 M1 6.3 H5" stroke="#5a5a5a" stroke-width="1.1" fill="none"/></svg><svg class="a" style="left:462px;top:494px;" width="14" height="9" viewBox="0 0 14 9"><path d="M1 4.5 Q7 -1.5 13 4.5 Q7 10.5 1 4.5 Z" stroke="#5a5a5a" stroke-width="1.2" fill="none"/><circle cx="7" cy="4.5" r="1.8" fill="#5a5a5a"/></svg><svg class="a" style="left:400px;top:514px;" width="8" height="9" viewBox="0 0 8 9"><path d="M2 4 V2.5 A2 2 0 0 1 6 2.5" stroke="#555" stroke-width="1.1" fill="none"/><rect x="1" y="4" width="6" height="4.5" rx="0.8" fill="#555"/></svg><div class="a" style="left:411px;top:509px;width:26px;height:19px;background:#1b66a3;"></div><div class="t" style="left:224px;width:400px;text-align:center;top:515.20px;font-size:7.6px;height:7.6px;color:#d4dbe2;">V1</div><svg class="a" style="left:442px;top:513px;" width="12" height="10" viewBox="0 0 12 10"><path d="M1 1 H6.5 A4 4 0 0 1 6.5 9 H1 Z M1 3.7 H5 M1 6.3 H5" stroke="#5a5a5a" stroke-width="1.1" fill="none"/></svg><svg class="a" style="left:462px;top:514px;" width="14" height="9" viewBox="0 0 14 9"><path d="M1 4.5 Q7 -1.5 13 4.5 Q7 10.5 1 4.5 Z" stroke="#5a5a5a" stroke-width="1.2" fill="none"/><circle cx="7" cy="4.5" r="1.8" fill="#5a5a5a"/></svg><svg class="a" style="left:400px;top:537px;" width="8" height="9" viewBox="0 0 8 9"><path d="M2 4 V2.5 A2 2 0 0 1 6 2.5" stroke="#555" stroke-width="1.1" fill="none"/><rect x="1" y="4" width="6" height="4.5" rx="0.8" fill="#555"/></svg><div class="a" style="left:411px;top:531px;width:26px;height:19px;background:#1b66a3;"></div><div class="t" style="left:224px;width:400px;text-align:center;top:537.70px;font-size:7.6px;height:7.6px;color:#d4dbe2;">A1</div><svg class="a" style="left:442px;top:536px;" width="12" height="10" viewBox="0 0 12 10"><path d="M1 1 H6.5 A4 4 0 0 1 6.5 9 H1 Z M1 3.7 H5 M1 6.3 H5" stroke="#5a5a5a" stroke-width="1.1" fill="none"/></svg><div class="t" style="left:269px;width:400px;text-align:center;top:537.75px;font-size:7.5px;height:7.5px;color:#505050;">M</div><div class="t" style="left:292px;width:400px;text-align:center;top:537.75px;font-size:7.5px;height:7.5px;color:#4c4c4c;">S</div><svg class="a" style="left:506px;top:535px;" width="9" height="13" viewBox="0 0 9 13"><rect x="1.5" y="0.5" width="6" height="8.5" rx="3" fill="#505050"/><path d="M1 7 Q4.5 12 8 7 M4.5 10.5 V12.5" stroke="#505050" fill="none"/></svg><svg class="a" style="left:400px;top:557px;" width="8" height="9" viewBox="0 0 8 9"><path d="M2 4 V2.5 A2 2 0 0 1 6 2.5" stroke="#555" stroke-width="1.1" fill="none"/><rect x="1" y="4" width="6" height="4.5" rx="0.8" fill="#555"/></svg><div class="a" style="left:411px;top:551px;width:26px;height:19px;background:#1b66a3;"></div><div class="t" style="left:224px;width:400px;text-align:center;top:557.70px;font-size:7.6px;height:7.6px;color:#d4dbe2;">A2</div><svg class="a" style="left:442px;top:556px;" width="12" height="10" viewBox="0 0 12 10"><path d="M1 1 H6.5 A4 4 0 0 1 6.5 9 H1 Z M1 3.7 H5 M1 6.3 H5" stroke="#5a5a5a" stroke-width="1.1" fill="none"/></svg><div class="t" style="left:269px;width:400px;text-align:center;top:557.75px;font-size:7.5px;height:7.5px;color:#505050;">M</div><div class="t" style="left:292px;width:400px;text-align:center;top:557.75px;font-size:7.5px;height:7.5px;color:#4c4c4c;">S</div><svg class="a" style="left:506px;top:555px;" width="9" height="13" viewBox="0 0 9 13"><rect x="1.5" y="0.5" width="6" height="8.5" rx="3" fill="#505050"/><path d="M1 7 Q4.5 12 8 7 M4.5 10.5 V12.5" stroke="#505050" fill="none"/></svg><svg class="a" style="left:400px;top:577px;" width="8" height="9" viewBox="0 0 8 9"><path d="M2 4 V2.5 A2 2 0 0 1 6 2.5" stroke="#555" stroke-width="1.1" fill="none"/><rect x="1" y="4" width="6" height="4.5" rx="0.8" fill="#555"/></svg><div class="a" style="left:411px;top:571px;width:26px;height:18px;background:#1b66a3;"></div><div class="t" style="left:224px;width:400px;text-align:center;top:577.70px;font-size:7.6px;height:7.6px;color:#d4dbe2;">A3</div><svg class="a" style="left:442px;top:576px;" width="12" height="10" viewBox="0 0 12 10"><path d="M1 1 H6.5 A4 4 0 0 1 6.5 9 H1 Z M1 3.7 H5 M1 6.3 H5" stroke="#5a5a5a" stroke-width="1.1" fill="none"/></svg><div class="t" style="left:269px;width:400px;text-align:center;top:577.75px;font-size:7.5px;height:7.5px;color:#505050;">M</div><div class="t" style="left:292px;width:400px;text-align:center;top:577.75px;font-size:7.5px;height:7.5px;color:#4c4c4c;">S</div><svg class="a" style="left:506px;top:575px;" width="9" height="13" viewBox="0 0 9 13"><rect x="1.5" y="0.5" width="6" height="8.5" rx="3" fill="#505050"/><path d="M1 7 Q4.5 12 8 7 M4.5 10.5 V12.5" stroke="#505050" fill="none"/></svg><div class="t" style="left:549px;top:422.70px;font-size:8.6px;height:8.6px;color:#a9a9a9;">;00;00</div><div class="t" style="left:586px;top:422.70px;font-size:8.6px;height:8.6px;color:#a9a9a9;">00;00;14;29</div><div class="t" style="left:645px;top:422.70px;font-size:8.6px;height:8.6px;color:#a9a9a9;">00;00;29;29</div><div class="t" style="left:704px;top:422.70px;font-size:8.6px;height:8.6px;color:#a9a9a9;">00;00;44;28</div><div class="t" style="left:764px;top:422.70px;font-size:8.6px;height:8.6px;color:#a9a9a9;">00;00;59;28</div><div class="t" style="left:823px;top:422.70px;font-size:8.6px;height:8.6px;color:#a9a9a9;">00;01;14;29</div><div class="t" style="left:883px;top:422.70px;font-size:8.6px;height:8.6px;color:#a9a9a9;">00;01;29;29</div><div class="t" style="left:942px;top:422.70px;font-size:8.6px;height:8.6px;color:#a9a9a9;">00;01;44;28</div><svg class="a" style="left:548px;top:432px;" width="460" height="9" viewBox="0 0 460 9"><rect x="0.0" y="1" width="1" height="8" fill="#555555"/><rect x="4.0" y="3" width="1" height="6" fill="#474747"/><rect x="7.9" y="3" width="1" height="6" fill="#474747"/><rect x="11.9" y="3" width="1" height="6" fill="#474747"/><rect x="15.9" y="3" width="1" height="6" fill="#474747"/><rect x="19.9" y="3" width="1" height="6" fill="#474747"/><rect x="23.8" y="3" width="1" height="6" fill="#474747"/><rect x="27.8" y="3" width="1" height="6" fill="#474747"/><rect x="31.8" y="3" width="1" height="6" fill="#474747"/><rect x="35.7" y="3" width="1" height="6" fill="#474747"/><rect x="39.7" y="3" width="1" height="6" fill="#474747"/><rect x="43.7" y="3" width="1" height="6" fill="#474747"/><rect x="47.6" y="3" width="1" height="6" fill="#474747"/><rect x="51.6" y="3" width="1" height="6" fill="#474747"/><rect x="55.6" y="3" width="1" height="6" fill="#474747"/><rect x="59.5" y="1" width="1" height="8" fill="#555555"/><rect x="63.5" y="3" width="1" height="6" fill="#474747"/><rect x="67.5" y="3" width="1" height="6" fill="#474747"/><rect x="71.5" y="3" width="1" height="6" fill="#474747"/><rect x="75.4" y="3" width="1" height="6" fill="#474747"/><rect x="79.4" y="3" width="1" height="6" fill="#474747"/><rect x="83.4" y="3" width="1" height="6" fill="#474747"/><rect x="87.3" y="3" width="1" height="6" fill="#474747"/><rect x="91.3" y="3" width="1" height="6" fill="#474747"/><rect x="95.3" y="3" width="1" height="6" fill="#474747"/><rect x="99.2" y="3" width="1" height="6" fill="#474747"/><rect x="103.2" y="3" width="1" height="6" fill="#474747"/><rect x="107.2" y="3" width="1" height="6" fill="#474747"/><rect x="111.2" y="3" width="1" height="6" fill="#474747"/><rect x="115.1" y="3" width="1" height="6" fill="#474747"/><rect x="119.1" y="1" width="1" height="8" fill="#555555"/><rect x="123.1" y="3" width="1" height="6" fill="#474747"/><rect x="127.0" y="3" width="1" height="6" fill="#474747"/><rect x="131.0" y="3" width="1" height="6" fill="#474747"/><rect x="135.0" y="3" width="1" height="6" fill="#474747"/><rect x="139.0" y="3" width="1" height="6" fill="#474747"/><rect x="142.9" y="3" width="1" height="6" fill="#474747"/><rect x="146.9" y="3" width="1" height="6" fill="#474747"/><rect x="150.9" y="3" width="1" height="6" fill="#474747"/><rect x="154.8" y="3" width="1" height="6" fill="#474747"/><rect x="158.8" y="3" width="1" height="6" fill="#474747"/><rect x="162.8" y="3" width="1" height="6" fill="#474747"/><rect x="166.7" y="3" width="1" height="6" fill="#474747"/><rect x="170.7" y="3" width="1" height="6" fill="#474747"/><rect x="174.7" y="3" width="1" height="6" fill="#474747"/><rect x="178.6" y="1" width="1" height="8" fill="#555555"/><rect x="182.6" y="3" width="1" height="6" fill="#474747"/><rect x="186.6" y="3" width="1" height="6" fill="#474747"/><rect x="190.6" y="3" width="1" height="6" fill="#474747"/><rect x="194.5" y="3" width="1" height="6" fill="#474747"/><rect x="198.5" y="3" width="1" height="6" fill="#474747"/><rect x="202.5" y="3" width="1" height="6" fill="#474747"/><rect x="206.4" y="3" width="1" height="6" fill="#474747"/><rect x="210.4" y="3" width="1" height="6" fill="#474747"/><rect x="214.4" y="3" width="1" height="6" fill="#474747"/><rect x="218.4" y="3" width="1" height="6" fill="#474747"/><rect x="222.3" y="3" width="1" height="6" fill="#474747"/><rect x="226.3" y="3" width="1" height="6" fill="#474747"/><rect x="230.3" y="3" width="1" height="6" fill="#474747"/><rect x="234.2" y="3" width="1" height="6" fill="#474747"/><rect x="238.2" y="1" width="1" height="8" fill="#555555"/><rect x="242.2" y="3" width="1" height="6" fill="#474747"/><rect x="246.1" y="3" width="1" height="6" fill="#474747"/><rect x="250.1" y="3" width="1" height="6" fill="#474747"/><rect x="254.1" y="3" width="1" height="6" fill="#474747"/><rect x="258.0" y="3" width="1" height="6" fill="#474747"/><rect x="262.0" y="3" width="1" height="6" fill="#474747"/><rect x="266.0" y="3" width="1" height="6" fill="#474747"/><rect x="270.0" y="3" width="1" height="6" fill="#474747"/><rect x="273.9" y="3" width="1" height="6" fill="#474747"/><rect x="277.9" y="3" width="1" height="6" fill="#474747"/><rect x="281.9" y="3" width="1" height="6" fill="#474747"/><rect x="285.8" y="3" width="1" height="6" fill="#474747"/><rect x="289.8" y="3" width="1" height="6" fill="#474747"/><rect x="293.8" y="3" width="1" height="6" fill="#474747"/><rect x="297.8" y="1" width="1" height="8" fill="#555555"/><rect x="301.7" y="3" width="1" height="6" fill="#474747"/><rect x="305.7" y="3" width="1" height="6" fill="#474747"/><rect x="309.7" y="3" width="1" height="6" fill="#474747"/><rect x="313.6" y="3" width="1" height="6" fill="#474747"/><rect x="317.6" y="3" width="1" height="6" fill="#474747"/><rect x="321.6" y="3" width="1" height="6" fill="#474747"/><rect x="325.5" y="3" width="1" height="6" fill="#474747"/><rect x="329.5" y="3" width="1" height="6" fill="#474747"/><rect x="333.5" y="3" width="1" height="6" fill="#474747"/><rect x="337.5" y="3" width="1" height="6" fill="#474747"/><rect x="341.4" y="3" width="1" height="6" fill="#474747"/><rect x="345.4" y="3" width="1" height="6" fill="#474747"/><rect x="349.4" y="3" width="1" height="6" fill="#474747"/><rect x="353.3" y="3" width="1" height="6" fill="#474747"/><rect x="357.3" y="1" width="1" height="8" fill="#555555"/><rect x="361.3" y="3" width="1" height="6" fill="#474747"/><rect x="365.2" y="3" width="1" height="6" fill="#474747"/><rect x="369.2" y="3" width="1" height="6" fill="#474747"/><rect x="373.2" y="3" width="1" height="6" fill="#474747"/><rect x="377.2" y="3" width="1" height="6" fill="#474747"/><rect x="381.1" y="3" width="1" height="6" fill="#474747"/><rect x="385.1" y="3" width="1" height="6" fill="#474747"/><rect x="389.1" y="3" width="1" height="6" fill="#474747"/><rect x="393.0" y="3" width="1" height="6" fill="#474747"/><rect x="397.0" y="3" width="1" height="6" fill="#474747"/><rect x="401.0" y="3" width="1" height="6" fill="#474747"/><rect x="404.9" y="3" width="1" height="6" fill="#474747"/><rect x="408.9" y="3" width="1" height="6" fill="#474747"/><rect x="412.9" y="3" width="1" height="6" fill="#474747"/><rect x="416.9" y="1" width="1" height="8" fill="#555555"/><rect x="420.8" y="3" width="1" height="6" fill="#474747"/><rect x="424.8" y="3" width="1" height="6" fill="#474747"/><rect x="428.8" y="3" width="1" height="6" fill="#474747"/><rect x="432.7" y="3" width="1" height="6" fill="#474747"/><rect x="436.7" y="3" width="1" height="6" fill="#474747"/><rect x="440.7" y="3" width="1" height="6" fill="#474747"/><rect x="444.6" y="3" width="1" height="6" fill="#474747"/><rect x="448.6" y="3" width="1" height="6" fill="#474747"/></svg><div class="a" style="left:549px;top:441px;width:173px;height:2px;background:#d7cf2a;"></div><div class="a" style="left:547px;top:431px;width:5px;height:11px;background:#3f8ae6;border-radius:1px"></div><div class="a" style="left:548px;top:441px;width:1px;height:147px;background:#3f6db8;"></div><div class="a" style="left:548px;top:509px;width:66px;height:19px;background:#e9e9ee;"></div><div class="a" style="left:551px;top:512px;width:59px;height:13px;background:#a791e6;"></div><div class="a" style="left:614px;top:509px;width:71px;height:19px;background:#a791e6;"></div><div class="a" style="left:685px;top:509px;width:37px;height:19px;background:#a791e6;"></div><div class="a" style="left:614px;top:509px;width:1px;height:19px;background:#2c2640;"></div><div class="a" style="left:685px;top:509px;width:1px;height:19px;background:#2c2640;"></div><div class="a" style="left:721px;top:509px;width:1px;height:19px;background:#2c2640;"></div><svg class="a" style="left:556px;top:512px;" width="8" height="7" viewBox="0 0 8 7"><rect width="8" height="7" fill="#3c3c3c"/><path d="M1.5 6 L6.5 1" stroke="#8a8a8a" stroke-width="1.2"/></svg><svg class="a" style="left:623px;top:513px;" width="8" height="7" viewBox="0 0 8 7"><rect width="8" height="7" fill="#3c3c3c"/><path d="M1.5 6 L6.5 1" stroke="#8a8a8a" stroke-width="1.2"/></svg><svg class="a" style="left:695px;top:513px;" width="8" height="7" viewBox="0 0 8 7"><rect width="8" height="7" fill="#3c3c3c"/><path d="M1.5 6 L6.5 1" stroke="#8a8a8a" stroke-width="1.2"/></svg><div class="t" style="left:571px;top:512.00px;font-size:9px;height:9px;color:#3a3060;">全国一卷</div><div class="t" style="left:638px;top:513.00px;font-size:9px;height:9px;color:#3a3060;">上海卷数学.</div><svg class="a" style="left:610.5px;top:507px;" width="8" height="6" viewBox="0 0 8 6"><path d="M0.5 0.5 L4 5 L7.5 0.5 Z" fill="#f0f0f0" stroke="#1a1a1a" stroke-width="0.8"/></svg><svg class="a" style="left:681.5px;top:507px;" width="8" height="6" viewBox="0 0 8 6"><path d="M0.5 0.5 L4 5 L7.5 0.5 Z" fill="#f0f0f0" stroke="#1a1a1a" stroke-width="0.8"/></svg><svg class="a" style="left:717px;top:507px;" width="8" height="6" viewBox="0 0 8 6"><path d="M0.5 0.5 L4 5 L7.5 0.5 Z" fill="#f0f0f0" stroke="#1a1a1a" stroke-width="0.8"/></svg><svg class="a" style="left:546px;top:507px;" width="5" height="5" viewBox="0 0 5 5"><path d="M0 4.5 L4 0.5" stroke="#ddd" stroke-width="1"/></svg><div class="a" style="left:1032px;top:406px;width:22px;height:182px;background:#1f1f1f;border:1px solid #131313"></div><div class="a" style="left:1033px;top:407px;width:10px;height:8px;background:#262626;"></div><div class="a" style="left:1044px;top:407px;width:9px;height:8px;background:#262626;"></div><div class="a" style="left:1054px;top:406px;width:2px;height:182px;background:#111111;"></div><div class="a" style="left:1054px;top:410px;width:2px;height:1px;background:#5a5a5a;"></div><div class="a" style="left:1054px;top:414px;width:2px;height:1px;background:#5a5a5a;"></div><div class="a" style="left:1054px;top:418px;width:2px;height:1px;background:#5a5a5a;"></div><div class="a" style="left:1054px;top:422px;width:2px;height:1px;background:#5a5a5a;"></div><div class="a" style="left:1054px;top:426px;width:2px;height:1px;background:#5a5a5a;"></div><div class="a" style="left:1054px;top:430px;width:2px;height:1px;background:#5a5a5a;"></div><div class="a" style="left:1054px;top:434px;width:2px;height:1px;background:#5a5a5a;"></div><div class="a" style="left:1054px;top:438px;width:2px;height:1px;background:#5a5a5a;"></div><div class="a" style="left:1054px;top:442px;width:2px;height:1px;background:#5a5a5a;"></div><div class="a" style="left:1054px;top:446px;width:2px;height:1px;background:#5a5a5a;"></div><div class="a" style="left:1054px;top:450px;width:2px;height:1px;background:#5a5a5a;"></div><div class="a" style="left:1054px;top:454px;width:2px;height:1px;background:#5a5a5a;"></div><div class="a" style="left:1054px;top:458px;width:2px;height:1px;background:#5a5a5a;"></div><div class="a" style="left:1054px;top:462px;width:2px;height:1px;background:#5a5a5a;"></div><div class="a" style="left:1054px;top:466px;width:2px;height:1px;background:#5a5a5a;"></div><div class="a" style="left:1054px;top:470px;width:2px;height:1px;background:#5a5a5a;"></div><div class="a" style="left:1054px;top:474px;width:2px;height:1px;background:#5a5a5a;"></div><div class="a" style="left:1054px;top:478px;width:2px;height:1px;background:#5a5a5a;"></div><div class="a" style="left:1054px;top:482px;width:2px;height:1px;background:#5a5a5a;"></div><div class="a" style="left:1054px;top:486px;width:2px;height:1px;background:#5a5a5a;"></div><div class="a" style="left:1054px;top:490px;width:2px;height:1px;background:#5a5a5a;"></div><div class="a" style="left:1054px;top:494px;width:2px;height:1px;background:#5a5a5a;"></div><div class="a" style="left:1054px;top:498px;width:2px;height:1px;background:#5a5a5a;"></div><div class="a" style="left:1054px;top:502px;width:2px;height:1px;background:#5a5a5a;"></div><div class="a" style="left:1054px;top:506px;width:2px;height:1px;background:#5a5a5a;"></div><div class="a" style="left:1054px;top:510px;width:2px;height:1px;background:#5a5a5a;"></div><div class="a" style="left:1054px;top:514px;width:2px;height:1px;background:#5a5a5a;"></div><div class="a" style="left:1054px;top:518px;width:2px;height:1px;background:#5a5a5a;"></div><div class="a" style="left:1054px;top:522px;width:2px;height:1px;background:#5a5a5a;"></div><div class="a" style="left:1054px;top:526px;width:2px;height:1px;background:#5a5a5a;"></div><div class="a" style="left:1054px;top:530px;width:2px;height:1px;background:#5a5a5a;"></div><div class="a" style="left:1054px;top:534px;width:2px;height:1px;background:#5a5a5a;"></div><div class="a" style="left:1054px;top:538px;width:2px;height:1px;background:#5a5a5a;"></div><div class="a" style="left:1054px;top:542px;width:2px;height:1px;background:#5a5a5a;"></div><div class="a" style="left:1054px;top:546px;width:2px;height:1px;background:#5a5a5a;"></div><div class="a" style="left:1054px;top:550px;width:2px;height:1px;background:#5a5a5a;"></div><div class="a" style="left:1054px;top:554px;width:2px;height:1px;background:#5a5a5a;"></div><div class="a" style="left:1054px;top:558px;width:2px;height:1px;background:#5a5a5a;"></div><div class="a" style="left:1054px;top:562px;width:2px;height:1px;background:#5a5a5a;"></div><div class="a" style="left:1054px;top:566px;width:2px;height:1px;background:#5a5a5a;"></div><div class="a" style="left:1054px;top:570px;width:2px;height:1px;background:#5a5a5a;"></div><div class="a" style="left:1054px;top:574px;width:2px;height:1px;background:#5a5a5a;"></div><div class="a" style="left:1054px;top:578px;width:2px;height:1px;background:#5a5a5a;"></div><div class="a" style="left:1054px;top:582px;width:2px;height:1px;background:#5a5a5a;"></div><div class="a" style="left:1054px;top:586px;width:2px;height:1px;background:#5a5a5a;"></div><div class="t" style="left:1058px;top:411.25px;font-size:7.5px;height:7.5px;color:#8a8a8a;">0</div><div class="a" style="left:1055px;top:415px;width:2px;height:1px;background:#6a6a6a;"></div><div class="t" style="left:1058px;top:431.25px;font-size:7.5px;height:7.5px;color:#8a8a8a;">-6</div><div class="a" style="left:1055px;top:435px;width:2px;height:1px;background:#6a6a6a;"></div><div class="t" style="left:1058px;top:450.25px;font-size:7.5px;height:7.5px;color:#8a8a8a;">-12</div><div class="a" style="left:1055px;top:454px;width:2px;height:1px;background:#6a6a6a;"></div><div class="t" style="left:1058px;top:470.25px;font-size:7.5px;height:7.5px;color:#8a8a8a;">-18</div><div class="a" style="left:1055px;top:474px;width:2px;height:1px;background:#6a6a6a;"></div><div class="t" style="left:1058px;top:489.25px;font-size:7.5px;height:7.5px;color:#8a8a8a;">-24</div><div class="a" style="left:1055px;top:493px;width:2px;height:1px;background:#6a6a6a;"></div><div class="t" style="left:1058px;top:508.25px;font-size:7.5px;height:7.5px;color:#8a8a8a;">-30</div><div class="a" style="left:1055px;top:512px;width:2px;height:1px;background:#6a6a6a;"></div><div class="t" style="left:1058px;top:527.25px;font-size:7.5px;height:7.5px;color:#8a8a8a;">-36</div><div class="a" style="left:1055px;top:531px;width:2px;height:1px;background:#6a6a6a;"></div><div class="t" style="left:1058px;top:547.25px;font-size:7.5px;height:7.5px;color:#8a8a8a;">-42</div><div class="a" style="left:1055px;top:551px;width:2px;height:1px;background:#6a6a6a;"></div><div class="t" style="left:1058px;top:566.25px;font-size:7.5px;height:7.5px;color:#8a8a8a;">-48</div><div class="a" style="left:1055px;top:570px;width:2px;height:1px;background:#6a6a6a;"></div><div class="t" style="left:1058px;top:585.25px;font-size:7.5px;height:7.5px;color:#8a8a8a;">-54</div><div class="a" style="left:1055px;top:589px;width:2px;height:1px;background:#6a6a6a;"></div><div class="a" style="left:370px;top:197px;width:340px;height:220px;background:#222222;border:1px solid #9c9c9c"></div><div class="a" style="left:371px;top:198px;width:338px;height:21px;background:#ffffff;"></div><div class="t" style="left:376px;top:203.65px;font-size:9.7px;height:9.7px;color:#1a1a1a;">剪辑速度/持续时间</div><svg class="a" style="left:691px;top:203px;" width="10" height="10" viewBox="0 0 10 10"><path d="M1 1 L9 9 M9 1 L1 9" stroke="#222" stroke-width="1.1"/></svg><div class="a" style="left:384px;top:237px;width:172px;height:61px;background:transparent;border:1px solid #2b2b2b"></div><div class="t" style="right:640px;top:250.75px;font-size:10.5px;height:10.5px;color:#9a9a9a;">速度:</div><div class="a" style="left:447px;top:248px;width:46px;height:17px;background:#0f2a4a;"></div><div class="a" style="left:448px;top:249px;width:44px;height:15px;background:#e6edf6;"></div><div class="t" style="left:450px;top:251.50px;font-size:10px;height:10px;color:#1a1a1a;">200</div><div class="a" style="left:466px;top:251px;width:1px;height:11px;background:#333;"></div><div class="t" style="left:495px;top:252.50px;font-size:9px;height:9px;color:#a9a9a9;">%</div><div class="t" style="right:640px;top:275.25px;font-size:10.5px;height:10.5px;color:#7e7e7e;">持续时间:</div><div class="t" style="left:448px;top:276.20px;font-size:8.6px;height:8.6px;color:#2e72c4;">00;00;08;15</div><svg class="a" style="left:515px;top:277px;" width="12" height="24" viewBox="0 0 12 24"><path d="M1.5 1.5 H9.8 V21.5 H1.5" stroke="#cccccc" stroke-width="1.9" fill="none"/></svg><svg class="a" style="left:532px;top:281px;" width="14" height="15" viewBox="0 0 14 15"><path d="M5 7.5 V4 A2.3 2.3 0 0 1 9.6 4 V6.5 M5 9 V11 A2.3 2.3 0 0 0 9.6 11 V8 M3 2.5 L12.5 12.5" stroke="#c4c4c4" stroke-width="1.3" fill="none"/></svg><div class="a" style="left:395px;top:308px;width:11px;height:11px;background:transparent;border:1.5px solid #bdbdbd;border-radius:1px"></div><div class="t" style="left:409px;top:308.25px;font-size:10.5px;height:10.5px;color:#b0b0b0;">倒放速度</div><div class="a" style="left:395px;top:327px;width:11px;height:11px;background:transparent;border:1.5px solid #4a4a4a;border-radius:1px"></div><div class="t" style="left:409px;top:327.25px;font-size:10.5px;height:10.5px;color:#4c4c4c;">保持音频音调</div><div class="a" style="left:395px;top:346.5px;width:11px;height:11px;background:transparent;border:1.5px solid #bdbdbd;border-radius:1px"></div><div class="t" style="left:409px;top:346.75px;font-size:10.5px;height:10.5px;color:#b0b0b0;">波纹编辑，移动尾部剪辑</div><div class="t" style="left:396px;top:367.75px;font-size:10.5px;height:10.5px;color:#8e8e8e;">时间插值:</div><div class="a" style="left:447px;top:366px;width:93px;height:15px;background:#1c1c1c;border:1px solid #2a2a2a"></div><div class="t" style="left:452px;top:368.25px;font-size:10.5px;height:10.5px;color:#c8c8c8;">帧采样</div><svg class="a" style="left:528px;top:369px;" width="9" height="7" viewBox="0 0 9 7"><path d="M1 1.5 L4.5 5 L8 1.5" stroke="#cfcfcf" stroke-width="1.4" fill="none"/></svg><div class="a" style="left:473px;top:389px;width:63px;height:15px;background:transparent;border:1.6px solid #d6d6d6;border-radius:8px"></div><div class="t" style="left:304.5px;width:400px;text-align:center;top:391.25px;font-size:10.5px;height:10.5px;color:#e6e6e6;">确定</div><div class="a" style="left:544px;top:389px;width:64px;height:15px;background:transparent;border:1.6px solid #8c8c8c;border-radius:8px"></div><div class="t" style="left:376px;width:400px;text-align:center;top:391.25px;font-size:10.5px;height:10.5px;color:#7a7a7a;">取消</div>
</body></html>
